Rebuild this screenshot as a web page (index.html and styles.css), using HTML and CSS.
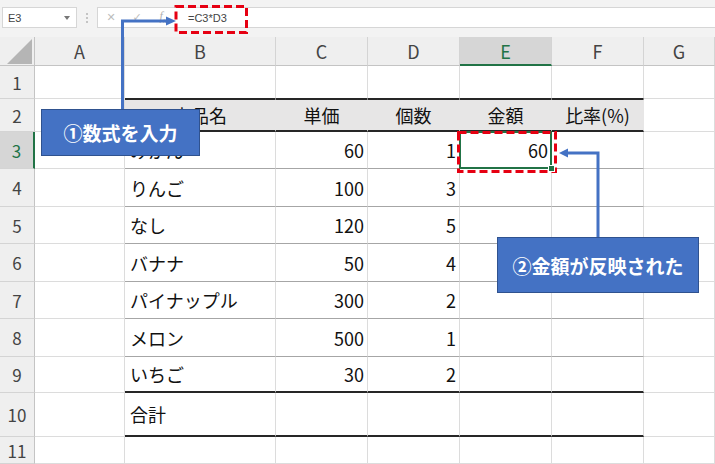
FILE: index.html
```html
<!DOCTYPE html>
<html lang="ja">
<head>
<meta charset="utf-8">
<title>Excel</title>
<link rel="stylesheet" href="styles.css">
</head>
<body>
<div class="app">
  <div class="toolbar">
    <div class="namebox"><span class="name">E3</span><span class="drop"></span></div>
    <div class="grip"><i></i><i></i><i></i></div>
    <div class="fbar">
      <div class="ficons"><span class="ic">✕</span><span class="ic">✓</span><span class="ic fx">f<sub>x</sub></span></div>
      <div class="ftext">=C3*D3</div>
    </div>
  </div>

  <div class="sheet">
    <div class="corner"><span class="tri"></span></div>
    <div class="ch">A</div><div class="ch">B</div><div class="ch">C</div><div class="ch">D</div><div class="ch sel">E</div><div class="ch">F</div><div class="ch">G</div>

    <div class="rh">1</div><div class="c"></div><div class="c top"></div><div class="c top"></div><div class="c top"></div><div class="c top"></div><div class="c top"></div><div class="c"></div>

    <div class="rh">2</div><div class="c"></div><div class="c hd">商品名</div><div class="c hd">単価</div><div class="c hd">個数</div><div class="c hd">金額</div><div class="c hd">比率(%)</div><div class="c"></div>

    <div class="rh sel">3</div><div class="c"></div><div class="c sep l">みかん</div><div class="c sep r">60</div><div class="c sep r">1</div><div class="c sep r active">60</div><div class="c sep"></div><div class="c"></div>

    <div class="rh">4</div><div class="c"></div><div class="c sep l">りんご</div><div class="c sep r">100</div><div class="c sep r">3</div><div class="c sep"></div><div class="c sep"></div><div class="c"></div>

    <div class="rh">5</div><div class="c"></div><div class="c sep l">なし</div><div class="c sep r">120</div><div class="c sep r">5</div><div class="c sep"></div><div class="c sep"></div><div class="c"></div>

    <div class="rh">6</div><div class="c"></div><div class="c sep l">バナナ</div><div class="c sep r">50</div><div class="c sep r">4</div><div class="c sep"></div><div class="c sep"></div><div class="c"></div>

    <div class="rh">7</div><div class="c"></div><div class="c sep l">パイナップル</div><div class="c sep r">300</div><div class="c sep r">2</div><div class="c sep"></div><div class="c sep"></div><div class="c"></div>

    <div class="rh">8</div><div class="c"></div><div class="c sep l">メロン</div><div class="c sep r">500</div><div class="c sep r">1</div><div class="c sep"></div><div class="c sep"></div><div class="c"></div>

    <div class="rh">9</div><div class="c"></div><div class="c thick l">いちご</div><div class="c thick r">30</div><div class="c thick r">2</div><div class="c thick"></div><div class="c thick"></div><div class="c"></div>

    <div class="rh">10</div><div class="c"></div><div class="c thick l">合計</div><div class="c thick"></div><div class="c thick"></div><div class="c thick"></div><div class="c thick"></div><div class="c"></div>

    <div class="rh">11</div><div class="c"></div><div class="c"></div><div class="c"></div><div class="c"></div><div class="c"></div><div class="c"></div><div class="c"></div>
  </div>

  <svg class="overlay" width="715" height="464" viewBox="0 0 715 464">
    <polyline points="122.5,110 122.5,21 167,21" fill="none" stroke="#4472c4" stroke-width="3"/>
    <polygon points="166,16.5 176,21 166,25.5" fill="#4472c4"/>
    <polyline points="598,238 598,153 566,153" fill="none" stroke="#4472c4" stroke-width="3"/>
    <polygon points="568,148.5 559,153 568,157.5" fill="#4472c4"/>
    <rect x="176" y="6.5" width="70.5" height="26" fill="none" stroke="#e60012" stroke-width="3" stroke-dasharray="8 4"/>
    <rect x="458.5" y="132.5" width="97" height="39" fill="none" stroke="#e60012" stroke-width="3" stroke-dasharray="8 4"/>
  </svg>

  <div class="callout c1">①数式を入力</div>
  <div class="callout c2">②金額が反映された</div>
</div>
</body>
</html>
```

FILE: styles.css
```css
html, body {
  margin: 0;
  padding: 0;
}
body {
  width: 715px;
  height: 464px;
  overflow: hidden;
  background: #fff;
  font-family: "Noto Sans CJK JP", "Noto Sans", sans-serif;
}
.app {
  position: relative;
  width: 715px;
  height: 464px;
}

/* formula bar */
.toolbar {
  height: 37px;
  box-sizing: border-box;
  background: #f3f3f3;
  display: flex;
  align-items: flex-start;
  padding: 7px 0 0 2px;
}
.namebox {
  width: 75px;
  height: 21px;
  box-sizing: border-box;
  background: #fff;
  border: 1px solid #d6d6d6;
  display: flex;
  align-items: center;
  justify-content: space-between;
  padding: 0 6px 0 5px;
  font-family: "Liberation Sans", Arial, sans-serif;
  font-size: 11px;
  color: #444;
}
.drop {
  width: 0;
  height: 0;
  border-left: 3px solid transparent;
  border-right: 3px solid transparent;
  border-top: 4px solid #777;
}
.grip {
  width: 20px;
  height: 21px;
  display: flex;
  flex-direction: column;
  align-items: center;
  justify-content: center;
  gap: 2px;
}
.grip i {
  display: block;
  width: 2px;
  height: 2px;
  background: #c4c4c4;
}
.fbar {
  flex: 1;
  height: 21px;
  box-sizing: border-box;
  background: #fff;
  border: 1px solid #d6d6d6;
  border-right: none;
  display: flex;
  align-items: center;
}
.ficons {
  display: flex;
  align-items: center;
  width: 78px;
}
.ic {
  width: 26px;
  text-align: center;
  color: #bdbdbd;
  font-family: "DejaVu Sans", sans-serif;
  font-size: 11px;
}
.fx {
  font-family: "Liberation Serif", serif;
  font-style: italic;
  font-size: 12px;
  color: #b0b0b0;
}
.fx sub {
  font-size: 8px;
}
.ftext {
  padding-left: 12px;
  font-family: "Liberation Sans", Arial, sans-serif;
  font-size: 11px;
  color: #444;
}

/* sheet grid */
.sheet {
  display: grid;
  grid-template-columns: 35px 90px 151px 92px 92px 92px 92px 71px;
  grid-template-rows: 29px 33px 33px 37px 38px 37px 38px 37px 38px 36px 44px 27px;
}
.sheet > div {
  box-sizing: border-box;
  display: flex;
  align-items: center;
  min-width: 0;
  line-height: 1;
}
.corner {
  background: #efefef;
  border-right: 1px solid #c4c4c4;
  border-bottom: 1px solid #c4c4c4;
  justify-content: flex-end;
  align-items: flex-end !important;
  padding: 0 2px 1px 0;
}
.tri {
  display: block;
  width: 25px;
  height: 25px;
  background: #b5b5b5;
  clip-path: polygon(100% 0, 100% 100%, 0 100%);
}
.ch {
  background: #efefef;
  border-right: 1px solid #d4d4d4;
  border-bottom: 1px solid #c4c4c4;
  justify-content: center;
  font-size: 18px;
  color: #444;
}
.ch.sel {
  background: #d6d6d6;
  border-bottom: 2px solid #217346;
  color: #217346;
}
.rh {
  background: #efefef;
  border-right: 1px solid #c4c4c4;
  border-bottom: 1px solid #d4d4d4;
  justify-content: center;
  font-size: 17px;
  color: #444;
}
.rh.sel {
  background: #d6d6d6;
  border-right: 2px solid #217346;
  color: #217346;
}
.c {
  border-right: 1px solid #dcdcdc;
  border-bottom: 1px solid #dcdcdc;
  font-size: 18px;
  color: #111;
}
.c.top {
  border-bottom-color: #262626;
}
.c.hd {
  background: #e7e6e6;
  border-top: 1px solid #262626;
  border-bottom: 2px solid #262626;
  border-right-color: #e7e6e6;
  justify-content: center;
}
.c.sep {
  border-bottom: 1px solid #a6a6a6;
}
.c.thick {
  border-bottom: 2px solid #262626;
}
.c.l {
  justify-content: flex-start;
  padding-left: 5px;
}
.c.r {
  justify-content: flex-end;
  padding-right: 3px;
}
.c.active {
  position: relative;
}
.c.active::after {
  content: "";
  position: absolute;
  left: -1px;
  top: -1px;
  right: -1px;
  bottom: -1px;
  border: 2px solid #217346;
}
.c.active::before {
  content: "";
  position: absolute;
  right: -4px;
  bottom: -4px;
  width: 5px;
  height: 5px;
  background: #217346;
  border: 1px solid #fff;
  z-index: 1;
}

/* annotations */
.overlay {
  position: absolute;
  left: 0;
  top: 0;
  pointer-events: none;
}
.callout {
  position: absolute;
  box-sizing: border-box;
  background: #4472c4;
  border: 1px solid #2f528f;
  color: #fff;
  font-weight: bold;
  font-size: 19px;
  display: flex;
  align-items: center;
  justify-content: center;
  line-height: 1;
}
.c1 {
  left: 41px;
  top: 109px;
  width: 159px;
  height: 47px;
}
.c2 {
  left: 497px;
  top: 237px;
  width: 202px;
  height: 56px;
}
```
